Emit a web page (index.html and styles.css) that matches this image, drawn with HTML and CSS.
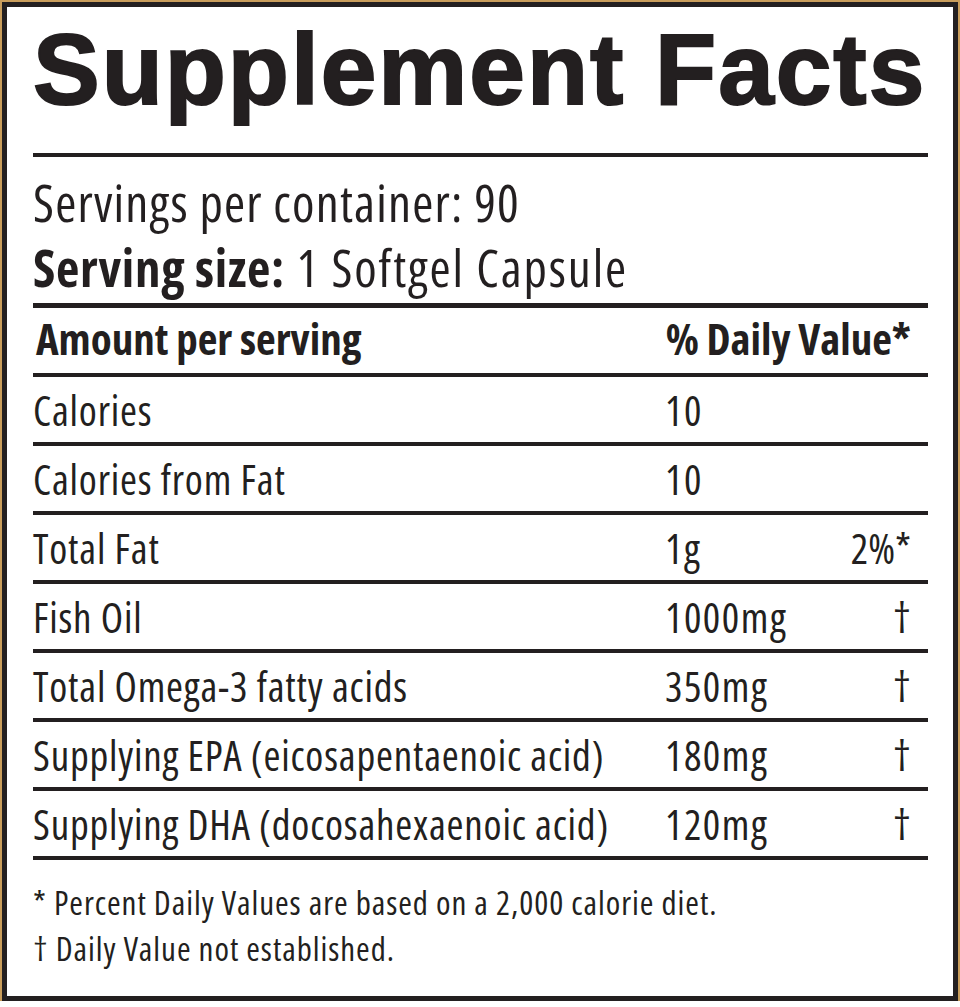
FILE: index.html
```html
<!DOCTYPE html>
<html lang="en">
<head>
<meta charset="utf-8">
<title>Supplement Facts</title>
<link rel="stylesheet" href="styles.css">
</head>
<body>
<div class="frame">
  <section class="label">
    <h1 class="title">Supplement Facts</h1>
    <div class="servings">
      <p class="line">Servings per container: 90</p>
      <p class="line size"><b>Serving size:</b> 1 Softgel Capsule</p>
    </div>
    <div class="table">
      <div class="row head"><span class="name">Amount per serving</span><span class="dvhead">% Daily Value*</span></div>
      <div class="row"><span class="name">Calories</span><span class="amt">10</span><span class="dv"></span></div>
      <div class="row"><span class="name">Calories from Fat</span><span class="amt">10</span><span class="dv"></span></div>
      <div class="row"><span class="name">Total Fat</span><span class="amt">1g</span><span class="dv">2%*</span></div>
      <div class="row"><span class="name">Fish Oil</span><span class="amt">1000mg</span><span class="dv">†</span></div>
      <div class="row"><span class="name">Total Omega-3 fatty acids</span><span class="amt">350mg</span><span class="dv">†</span></div>
      <div class="row"><span class="name">Supplying EPA (eicosapentaenoic acid)</span><span class="amt">180mg</span><span class="dv">†</span></div>
      <div class="row"><span class="name">Supplying DHA (docosahexaenoic acid)</span><span class="amt">120mg</span><span class="dv">†</span></div>
    </div>
    <div class="notes">
      <p>* Percent Daily Values are based on a 2,000 calorie diet.</p>
      <p>† Daily Value not established.</p>
    </div>
  </section>
</div>
</body>
</html>
```
FILE: styles.css
```css
html, body {
  margin: 0;
  padding: 0;
  background: #ffffff;
}

.frame {
  background: #c99d5b;
  padding: 2px 2px 0 2px;
  width: 960px;
  height: 1001px;
  box-sizing: border-box;
}

.label {
  box-sizing: border-box;
  height: 999px;
  background: #ffffff;
  border: 5px solid #231f20;
  padding: 12px 25px 0 26px;
  color: #231f20;
  font-family: "Open Sans", "DejaVu Sans Condensed", sans-serif;
  font-stretch: condensed;
}

.title {
  margin: 0;
  font-family: "Liberation Sans", Arial, sans-serif;
  font-stretch: normal;
  font-weight: 700;
  font-size: 100px;
  line-height: 100px;
  letter-spacing: 2px;
  -webkit-text-stroke: 2px #231f20;
  white-space: nowrap;
  padding-bottom: 34px;
  border-bottom: 4px solid #231f20;
}

.servings {
  padding: 13px 0 3px 0;
  border-bottom: 5px solid #231f20;
}

.line {
  margin: 0;
  font-size: 51px;
  line-height: 65px;
  letter-spacing: 1.2px;
  white-space: nowrap;
}

.line.size {
  letter-spacing: 1.9px;
}

.line b {
  font-weight: 700;
  letter-spacing: 0.7px;
}

.row {
  display: grid;
  grid-template-columns: 632px 1fr auto;
  padding: 3px 17px 0 0;
  box-sizing: border-box;
  border-bottom: 4px solid #231f20;
  font-size: 41px;
  line-height: 61px;
  white-space: nowrap;
  height: 69px;
}

.row .name {
  letter-spacing: 0.8px;
}

.row .amt {
  letter-spacing: 1.5px;
}

.row.head {
  padding: 0 17px 4px 0;
  font-size: 43px;
  font-weight: 700;
}

.row.head .name {
  padding-left: 3px;
  letter-spacing: 0;
}

.dvhead {
  grid-column: 2 / 4;
  justify-self: end;
}

.dv {
  text-align: right;
}

.notes {
  padding-top: 20px;
  font-size: 33px;
  line-height: 46px;
  letter-spacing: 0.95px;
}

.notes p {
  margin: 0;
  white-space: nowrap;
}
```
